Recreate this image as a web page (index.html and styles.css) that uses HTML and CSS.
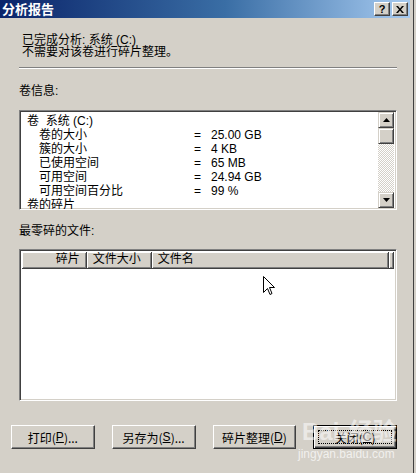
FILE: index.html
```html
<!DOCTYPE html>
<html lang="zh">
<head>
<meta charset="utf-8">
<link rel="stylesheet" href="styles.css">
</head>
<body>
<div class="screen">
  <div class="window">
    <div class="titlebar">
      <span class="title">分析报告</span>
      <div class="tb-buttons">
        <span class="tb-btn">?</span>
        <span class="tb-btn tb-close">
          <svg width="8" height="7" viewBox="0 0 8 7"><path d="M0 0h2l2 2.5L6 0h2L5 3.5 8 7H6L4 4.5 2 7H0l3-3.5z" fill="#000"/></svg>
        </span>
      </div>
    </div>
    <div class="content">
      <div class="message">
        <div>已完成分析: 系统 (C:)</div>
        <div>不需要对该卷进行碎片整理。</div>
      </div>
      <div class="separator"></div>
      <div class="label label-vol">卷信息:</div>
      <div class="listbox">
        <div class="list-rows">
          <div class="row"><span class="l0">卷&nbsp;&nbsp;系统 (C:)</span></div>
          <div class="row"><span class="l1">卷的大小</span><span class="eq">=</span><span class="val">25.00 GB</span></div>
          <div class="row"><span class="l1">簇的大小</span><span class="eq">=</span><span class="val">4 KB</span></div>
          <div class="row"><span class="l1">已使用空间</span><span class="eq">=</span><span class="val">65 MB</span></div>
          <div class="row"><span class="l1">可用空间</span><span class="eq">=</span><span class="val">24.94 GB</span></div>
          <div class="row"><span class="l1">可用空间百分比</span><span class="eq">=</span><span class="val">99 %</span></div>
          <div class="row"><span class="l0">卷的碎片</span></div>
        </div>
        <div class="scrollbar">
          <div class="sb-btn"><svg width="7" height="4" viewBox="0 0 7 4"><path d="M3.5 0L7 4H0z" fill="#000"/></svg></div>
          <div class="sb-thumb"></div>
          <div class="sb-track"></div>
          <div class="sb-btn"><svg width="7" height="4" viewBox="0 0 7 4"><path d="M0 0h7L3.5 4z" fill="#000"/></svg></div>
        </div>
      </div>
      <div class="label label-files">最零碎的文件:</div>
      <div class="filelist">
        <div class="fl-header">
          <div class="col col-frag">碎片</div>
          <div class="col col-size">文件大小</div>
          <div class="col col-name">文件名</div>
          <div class="col col-end"></div>
        </div>
        <div class="fl-body"></div>
      </div>
      <div class="buttons">
        <div class="btn">打印(<u>P</u>)...</div>
        <div class="btn">另存为(<u>S</u>)...</div>
        <div class="btn">碎片整理(<u>D</u>)</div>
        <div class="btn btn-default"><span class="focus">关闭(<u>C</u>)</span></div>
      </div>
    </div>
    <svg class="cursor" width="12" height="20" viewBox="0 0 12 20"><path d="M0.5 0.5V16.5L4.5 12.5L7 18.5L9 17.5L6.5 11.5H11.5Z" fill="#fff" stroke="#000" stroke-width="1"/></svg>
    <div class="watermark"><span class="wm-big">Bai<span class="wm-paw">●</span>经验</span><span class="wm-small">jingyan.baidu.com</span></div>
  </div>
  <div class="outside"></div>
</div>
</body>
</html>
```
FILE: styles.css
```css
html, body {
  margin: 0;
  padding: 0;
  background: #d4d0c8;
}
body {
  font-family: "Liberation Sans", "Noto Sans CJK SC", sans-serif;
  font-size: 12px;
  color: #000;
  width: 416px;
  height: 473px;
  overflow: hidden;
}
.screen {
  display: flex;
  height: 473px;
}
.window {
  position: relative;
  width: 410px;
  height: 473px;
  background: #d4d0c8;
  flex: none;
}
.outside {
  flex: 1;
  background: #d4d0c8;
  box-shadow: inset 3px 0 0 #d4d0c8, inset 4px 0 0 #404040;
}
.titlebar {
  height: 18px;
  background: linear-gradient(to right, #0a246a 0%, #3a6ea5 55%, #a6caf0 100%);
  display: flex;
  align-items: center;
  justify-content: space-between;
  padding-left: 2px;
}
.title {
  color: #fff;
  font-weight: bold;
  font-size: 13px;
  font-family: "Noto Sans CJK SC", sans-serif;
  line-height: 18px;
}
.tb-buttons {
  display: flex;
  gap: 2px;
  margin-right: 2px;
}
.tb-btn {
  width: 14px;
  height: 12px;
  background: #d4d0c8;
  border-top: 1px solid #fff;
  border-left: 1px solid #fff;
  border-right: 1px solid #404040;
  border-bottom: 1px solid #404040;
  box-shadow: inset -1px -1px 0 #808080;
  display: flex;
  align-items: center;
  justify-content: center;
  font-weight: bold;
  font-size: 11px;
  line-height: 12px;
  font-family: "Liberation Sans", sans-serif;
}
.content {
  padding: 0 13px 0 19px;
}
.message {
  padding-left: 3px;
  padding-top: 16px;
  line-height: 12px;
  font-size: 12px;
}
.separator {
  margin-top: 9px;
  height: 0;
  border-top: 1px solid #808080;
  border-bottom: 1px solid #fff;
}
.label {
  line-height: 14px;
}
.label-vol {
  margin-top: 15px;
}
.listbox {
  margin-top: 12px;
  height: 97px;
  background: #fff;
  border-top: 1px solid #808080;
  border-left: 1px solid #808080;
  border-right: 1px solid #fff;
  border-bottom: 1px solid #fff;
  box-shadow: inset 1px 1px 0 #404040, inset -1px -1px 0 #d4d0c8;
  display: flex;
  padding: 1px 2px 0 1px;
  overflow: hidden;
}
.list-rows {
  flex: 1;
  overflow: hidden;
  padding-left: 6px;
  padding-top: 2px;
}
.row {
  display: flex;
  height: 14px;
  line-height: 14px;
  white-space: nowrap;
}
.l0 {
  width: 170px;
}
.l1 {
  width: 155px;
  padding-left: 12px;
}
.eq {
  width: 17px;
}
.val {
  flex: 1;
}
.scrollbar {
  width: 16px;
  display: flex;
  flex-direction: column;
  padding-bottom: 1px;
}
.sb-btn, .sb-thumb {
  box-sizing: border-box;
  height: 16px;
  background: #d4d0c8;
  border-top: 1px solid #d4d0c8;
  border-left: 1px solid #d4d0c8;
  border-right: 1px solid #404040;
  border-bottom: 1px solid #404040;
  box-shadow: inset 1px 1px 0 #fff, inset -1px -1px 0 #808080;
  display: flex;
  align-items: center;
  justify-content: center;
}
.sb-track {
  flex: 1;
  background-color: #fff;
  background-image: repeating-conic-gradient(#d4d0c8 0 25%, #fff 0 50%);
  background-size: 2px 2px;
}
.label-files {
  margin-top: 14px;
}
.filelist {
  margin-top: 11px;
  height: 146px;
  background: #fff;
  border-top: 1px solid #808080;
  border-left: 1px solid #808080;
  border-right: 1px solid #fff;
  border-bottom: 1px solid #fff;
  box-shadow: inset 1px 1px 0 #404040, inset -1px -1px 0 #d4d0c8;
  padding: 2px;
  display: flex;
  flex-direction: column;
}
.fl-header {
  display: flex;
  height: 17px;
}
.col {
  box-sizing: border-box;
  height: 17px;
  line-height: 15px;
  background: #d4d0c8;
  border-right: 1px solid #404040;
  border-bottom: 1px solid #404040;
  box-shadow: inset 1px 1px 0 #fff, inset -1px -1px 0 #808080;
  padding: 0 6px;
  white-space: nowrap;
}
.col-frag {
  width: 65px;
  text-align: right;
}
.col-size {
  width: 65px;
}
.col-name {
  width: 238px;
}
.col-end {
  width: 5px;
  padding: 0;
}
.fl-body {
  flex: 1;
}
.buttons {
  margin-top: 24px;
  margin-left: -8px;
  display: flex;
  gap: 17px;
}
.btn {
  box-sizing: border-box;
  width: 84px;
  height: 24px;
  background: #d4d0c8;
  border-top: 1px solid #fff;
  border-left: 1px solid #fff;
  border-right: 1px solid #404040;
  border-bottom: 1px solid #404040;
  box-shadow: inset -1px -1px 0 #808080;
  display: flex;
  align-items: center;
  justify-content: center;
  font-family: "Noto Sans CJK SC", sans-serif;
  font-size: 12px;
  white-space: nowrap;
}
.btn u {
  font-family: "Liberation Sans", sans-serif;
}
.btn-default {
  border: 1px solid #000;
  box-shadow: inset 1px 1px 0 #fff, inset -1px -1px 0 #404040, inset -2px -2px 0 #808080;
  padding: 4px;
}
.focus {
  flex: 1;
  align-self: stretch;
  border: 1px dotted #000;
  display: flex;
  align-items: center;
  justify-content: center;
}
.cursor {
  position: absolute;
  left: 263px;
  top: 276px;
}
.watermark {
  position: absolute;
  left: 298px;
  top: 418px;
  display: flex;
  flex-direction: column;
  align-items: flex-start;
  pointer-events: none;
}
.wm-big {
  font-family: "Liberation Sans", "Noto Sans CJK SC", sans-serif;
  font-weight: bold;
  font-size: 24px;
  line-height: 28px;
  color: rgba(255, 255, 255, 0.55);
  padding-left: 4px;
}
.wm-paw {
  font-size: 16px;
}
.wm-small {
  font-family: "Liberation Sans", sans-serif;
  font-size: 12px;
  color: rgba(255, 255, 255, 0.7);
  margin-top: -2px;
}
```
